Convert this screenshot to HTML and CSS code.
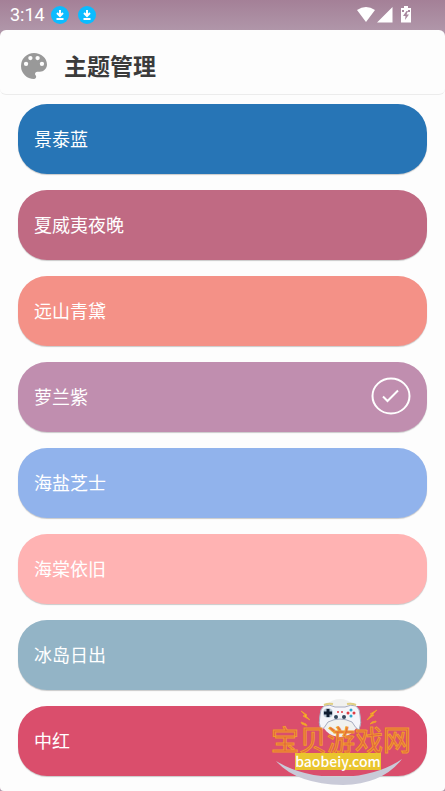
FILE: index.html
```html
<!DOCTYPE html>
<html lang="zh-CN">
<head>
<meta charset="utf-8">
<meta name="viewport" content="width=device-width, initial-scale=1">
<title>主题管理</title>
<link rel="stylesheet" href="styles.css">
</head>
<body>
<div class="status">
  <span class="clock">3:14</span>
  <svg class="download" viewBox="0 0 18 18"><circle cx="9" cy="9" r="9"/><path d="M9 4v6M6 7l3 3 3-3M5.500 13h7"/></svg>
  <svg class="download" viewBox="0 0 18 18"><circle cx="9" cy="9" r="9"/><path d="M9 4v6M6 7l3 3 3-3M5.500 13h7"/></svg>
  <svg class="system" viewBox="0 0 54 18"><path d="M0 4Q9-2 18 4L9 16zM35.500 1v15.500H20zM44 2h3V0h4v2h3v14.500H44z"/><path class="bolt" d="M49.500 5L46 10h2.500l-.5 4 4-5.500h-2.500L51 5zM45 4h2v2h-2zM51 4h2v2h-2z"/></svg>
</div>
<main class="sheet">
  <header class="header">
    <svg class="palette" viewBox="3 3 18 18"><path d="M12 3a9 9 0 0 0 0 18c.83 0 1.500-.67 1.500-1.500 0-.39-.15-.74-.39-1.010-.23-.26-.38-.61-.38-.99 0-.83.67-1.500 1.500-1.500H16c2.760 0 5-2.240 5-5 0-4.420-4.030-8-9-8zm-5.500 9a1.500 1.500 0 1 1 0-3 1.500 1.500 0 0 1 0 3zm3-4a1.500 1.500 0 1 1 0-3 1.500 1.500 0 0 1 0 3zm5 0a1.500 1.500 0 1 1 0-3 1.500 1.500 0 0 1 0 3zm3 4a1.500 1.500 0 1 1 0-3 1.500 1.500 0 0 1 0 3z"/></svg>
    <h1>主题管理</h1>
  </header>
  <div class="themes">
    <button class="theme blue">景泰蓝</button>
    <button class="theme hawaii">夏威夷夜晚</button>
    <button class="theme mountain">远山青黛</button>
    <button class="theme violet" aria-pressed="true">萝兰紫<svg class="check" viewBox="0 0 40 38"><ellipse cx="20" cy="19" rx="18.500" ry="17.500"/><path d="M12 19.500l4.500 4.500L27 13.500"/></svg></button>
    <button class="theme sea">海盐芝士</button>
    <button class="theme begonia">海棠依旧</button>
    <button class="theme iceland">冰岛日出</button>
    <button class="theme red">中红</button>
  </div>
</main>
<aside class="brand">
  <svg class="emblem" viewBox="0 0 140 94">
    <circle class="halo" cx="69" cy="21" r="19"/>
    <path class="swoosh" d="M5 64Q33 81 72 80Q108 78 131 62Q112 87 72 88Q25 87 5 64z"/>
    <path class="pad" d="M53 9Q59 7 64 10H74Q80 7 85 9Q89 12 89 18Q91 26 88 33Q85 32 81 25Q75 22 69 22T57 25Q53 32 50 33Q47 26 49 18Q49 12 53 9z"/>
    <path class="shoulder" d="M53 8q4-2 9-1M76 7q5-1 9 1"/>
    <circle class="cross-base" cx="57" cy="16" r="5"/><path class="cross" d="M57 12v8M53 16h8"/>
    <circle class="dark" cx="65" cy="20" r="2"/><circle class="dark" cx="73" cy="20" r="2"/>
    <circle class="hot" cx="67" cy="15" r="1"/><circle class="hot" cx="71" cy="15" r="1"/>
    <circle class="hot" cx="83" cy="16" r="1.500"/><circle class="hot" cx="77" cy="16" r="1.500"/><circle class="cool" cx="80" cy="13" r="1.500"/><circle class="cool" cx="80" cy="19" r="1.500"/>
    <path class="spark" d="M30 14l6 4-1 1 4 4-7-4 2-1zM30 25l5 2 1 2-5-2zM106 13l-5 5 2 0-7 5 5-6-2 0zM105 24l-4 1-2 2 6-2z"/>
  </svg>
  <span class="brand-name">宝贝游戏网</span>
  <span class="brand-url">baobeiy.com</span>
</aside>
</body>
</html>
```

FILE: styles.css
```css
* { box-sizing: border-box; }
body {
  margin: 0;
  min-height: 100vh;
  position: relative;
  background: linear-gradient(#a48097, #b096a9 30px);
  font-family: Roboto, "Noto Sans CJK SC", sans-serif;
}
.status {
  height: 30px;
  padding: 0 34px 0 10px;
  display: flex;
  align-items: center;
  gap: 9px;
  color: #fff;
}
.clock { font-size: 18px; line-height: 30px; margin-right: -3px; }
.download { width: 18px; height: 18px; fill: #0bbcff; }
.download path { fill: none; stroke: #fff; stroke-width: 2; }
.system { width: 54px; height: 18px; margin-left: auto; fill: #fff; }
.system .bolt { fill: #a9899f; }
.sheet {
  min-height: calc(100vh - 30px);
  background: #fdfdfd;
  border-radius: 6px 6px 4px 4px;
}
.header {
  height: 65px;
  padding: 7px 21px 0;
  display: flex;
  align-items: center;
  gap: 17px;
  border-bottom: 1px solid #ececec;
  border-radius: 6px;
}
.palette { width: 26px; height: 26px; fill: #999; }
h1 { margin: 0; padding-top: 4px; font-size: 23px; line-height: 30px; font-weight: 700; color: #3b3b3b; }
.themes {
  padding: 9px 18px 15px;
  display: flex;
  flex-direction: column;
  gap: 16px;
}
.theme {
  height: 70px;
  padding: 0 16px 2px;
  display: flex;
  align-items: center;
  justify-content: space-between;
  border: 0;
  border-radius: 29px;
  box-shadow: 0 1px 1px #0003;
  color: #fff;
  font: 18px/26px "Noto Sans CJK SC", sans-serif;
}
.blue { background: #2775b6; }
.hawaii { background: #c06a83; }
.mountain { background: #f49187; }
.violet { background: #c08eaf; }
.sea { background: #91b3ec; }
.begonia { background: #ffb3b3; }
.iceland { background: #93b4c6; }
.red { background: #da4e6c; }
.check { width: 40px; height: 38px; fill: none; stroke: #fff; stroke-width: 2; }
.brand {
  position: absolute;
  right: 34px;
  bottom: 0;
  width: 140px;
  height: 94px;
  display: flex;
  flex-direction: column;
  align-items: flex-start;
  padding-top: 28px;
  pointer-events: none;
}
.emblem { position: absolute; inset: 0; width: 100%; height: 100%; }
.halo { fill: #f1f1ef; }
.swoosh { fill: #c9cad8; }
.pad { fill: #f5f5fa; stroke: #a7acc0; stroke-width: 1; }
.shoulder { fill: none; stroke: #e0cf83; stroke-width: 2; }
.dark { fill: #34465c; }
.cross-base { fill: #b9c6d4; }
.cross { stroke: #101c30; stroke-width: 3; }
.hot { fill: #df3d46; }
.cool { fill: #2ca6cc; }
.spark { fill: #f3b52d; stroke: #f09a2d; stroke-width: 1; }
.brand-name {
  position: relative;
  color: #e1633f;
  font: 28px/28px "Noto Sans CJK SC", sans-serif;
  white-space: nowrap;
  -webkit-text-stroke: 1px #f09a2d;
}
.brand-url {
  position: relative;
  width: 86px;
  margin-left: 24px;
  background: #eac52e;
  color: #fff;
  font: 500 14px/17px "Noto Sans CJK SC", sans-serif;
  text-align: center;
}
```
